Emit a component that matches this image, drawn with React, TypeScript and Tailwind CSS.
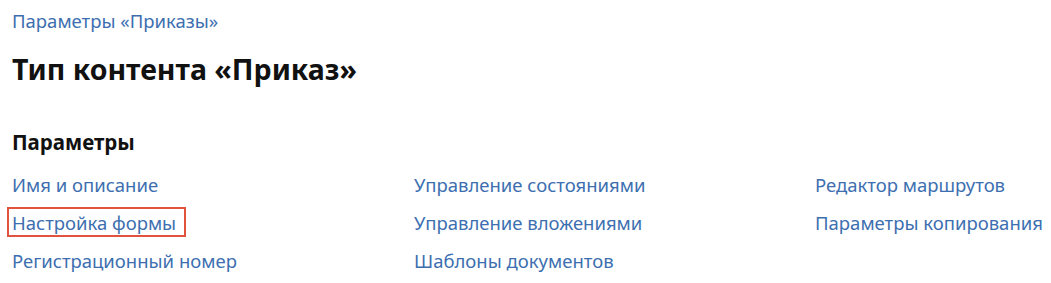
const columns = [
  ["Имя и описание", "Настройка формы", "Регистрационный номер"],
  ["Управление состояниями", "Управление вложениями", "Шаблоны документов"],
  ["Редактор маршрутов", "Параметры копирования"],
];

export default function App() {
  return (
    <div
      className="min-h-screen bg-white px-3 pt-[9px] text-[#111]"
      style={{ fontFamily: '"Noto Sans", "Open Sans", sans-serif' }}
    >
      <a href="#" className="block text-[18.5px] leading-[24px] text-[#3d6fb0]">
        Параметры «Приказы»
      </a>
      <h1 className="mt-[18px] text-[28.5px] font-bold leading-[36px]">
        Тип контента «Приказ»
      </h1>
      <h2 className="mt-[42px] text-[20.5px] font-bold leading-[26px]">Параметры</h2>
      <div className="mt-[11px] grid grid-cols-[402px_401px_1fr]">
        {columns.map((col, i) => (
          <ul key={i} className="flex flex-col">
            {col.map((item) => (
              <li key={item} className="h-[38px] whitespace-nowrap text-[18.5px] leading-[38px]">
                <a
                  href="#"
                  className={
                    item === "Настройка формы"
                      ? "-ml-[5px] inline-block border-2 border-[#e0533f] pb-[1px] pl-[3px] pr-[8px] pt-[2px] leading-[23px] text-[#3d6fb0]"
                      : "text-[#3d6fb0]"
                  }
                >
                  {item}
                </a>
              </li>
            ))}
          </ul>
        ))}
      </div>
    </div>
  );
}
